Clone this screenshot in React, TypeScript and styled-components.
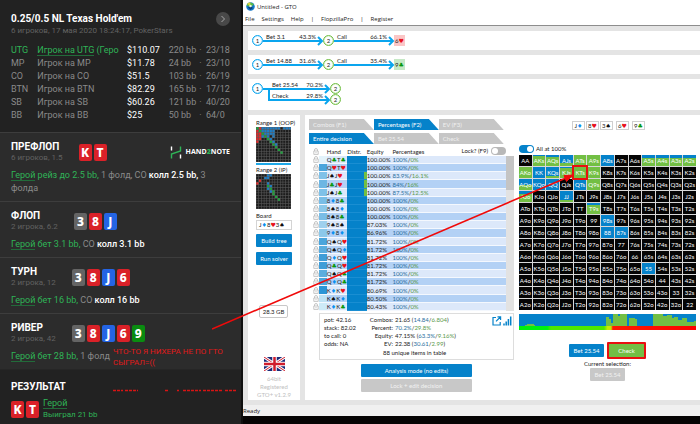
import React from "react";
import styled, { createGlobalStyle, css } from "styled-components";

const GlobalStyle = createGlobalStyle`
  *, *::before, *::after { box-sizing: border-box; }
  body { margin: 0; background: #060404; }
  h1, h2, p { margin: 0; }
  button, input { font: inherit; }
  table { border-collapse: collapse; border-spacing: 0; }
  td, th { padding: 0; text-align: left; font-weight: 400; }
`;

const BLUE = "#0582ca";
const GREEN = "#72bf44";

const Page = styled.div`
  position: relative;
  display: grid;
  grid-template-columns: 243px minmax(0, 1fr);
  min-height: 100vh;
  overflow: hidden;
`;

/* ---------- hand history ---------- */

const History = styled.aside`
  display: flex;
  flex-direction: column;
  background: #222222;
  border-right: 2px solid #101010;
  font-family: Roboto, sans-serif;
  font-size: 9px;
  color: #8a8a8a;
`;

const HistoryHeader = styled.header`
  padding: 12px 11px 10px;
  min-height: 131px;
`;

const TitleRow = styled.div`
  display: flex;
  justify-content: space-between;
  align-items: center;
  height: 13px;
`;

const Title = styled.h1`
  font-size: 10px;
  font-weight: 700;
  color: #ffffff;
`;

const RoundButton = styled.button`
  width: 14px;
  height: 14px;
  padding: 0;
  border: 0;
  border-radius: 50%;
  background: #484848;
  display: grid;
  place-items: center;
`;

const Meta = styled.p`
  font-size: 8px;
  line-height: 11px;
  color: #626262;
`;

const Seats = styled.table`
  width: 100%;
  margin-top: 8px;
  table-layout: fixed;
  white-space: nowrap;
  td { height: 13px; line-height: 13px; }
`;

const Seat = styled.tr<{ $hero?: boolean }>`
  td:nth-child(-n + 2) { color: ${(p) => (p.$hero ? "#2fb457" : "#8a8a8a")}; }
  td:nth-child(3) { color: #ffffff; }
`;

const HeroName = styled.span`
  border-bottom: 1px solid #226b3a;
`;

const Street = styled.section`
  position: relative;
  background: #2c2c2c;
  border-top: 1px solid #3d3d3d;
  padding: 8px 11px 6px;
`;

const StreetHead = styled.div`
  display: flex;
  align-items: center;
  gap: 16px;
  height: 22px;
  margin-bottom: 6px;
`;

const StreetName = styled.h2`
  font-size: 10px;
  line-height: 11px;
  font-weight: 700;
  color: #ffffff;
`;

const Cards = styled.div`
  display: flex;
  gap: 2px;
`;

const cardColor: Record<string, string> = { r: "#da2128", s: "#646464", b: "#2464e4", g: "#0a8c10" };

const Card = styled.span<{ $c: string }>`
  width: 13px;
  height: 17px;
  border-radius: 2px;
  background: ${(p) => cardColor[p.$c]};
  color: #ffffff;
  font: 800 12px/17px "Noto Sans", sans-serif;
  text-align: center;
`;

const Brand = styled.div`
  margin-left: auto;
  display: flex;
  align-items: center;
  gap: 4px;
  color: #ffffff;
  font: 700 7px/8px "Open Sans", sans-serif;
  b { color: #2fb457; }
`;

const Action = styled.p`
  line-height: 13px;
  color: #8a8a8a;
  a { color: #2fb457; text-decoration: none; border-bottom: 1px solid #226b3a; }
  em { color: #2fb457; font-style: normal; }
  strong { color: #ffffff; font-weight: 500; }
`;

const Remark = styled.p`
  position: absolute;
  left: 113px;
  top: 32px;
  width: 120px;
  font: 400 8px/11px Roboto, sans-serif;
  color: #e01a1a;
`;

const Result = styled.section`
  position: relative;
  border-top: 1px solid #262626;
  padding: 11px 11px 0;
  flex: 1;
`;

const Winner = styled.div`
  display: flex;
  align-items: center;
  gap: 4px;
  margin-top: 6px;
`;

const WinnerText = styled.div`
  font-size: 8px;
  line-height: 11px;
  color: #2fb457;
  a { font-size: 9px; color: inherit; text-decoration: none; border-bottom: 1px solid #226b3a; }
`;

const Scrap = styled.svg`
  position: absolute;
  left: 113px;
  top: 19px;
`;

type SeatRow = [string, string, string, string, string];
const seats: SeatRow[] = [
  ["UTG", "Игрок на UTG (Геро", "$110.07", "220 bb", "23/18"],
  ["MP", "Игрок на MP", "$11.78", "24 bb", "23/10"],
  ["CO", "Игрок на CO", "$51.5", "103 bb", "26/19"],
  ["BTN", "Игрок на BTN", "$82.29", "165 bb", "17/12"],
  ["SB", "Игрок на SB", "$60.26", "121 bb", "40/20"],
  ["BB", "Игрок на BB", "$25", "50 bb", "64/0"],
];

function CardRow({ cards }: { cards: string }) {
  return (
    <Cards>
      {cards.split(" ").map((c) => (
        <Card key={c} $c={c[1]}>{c[0]}</Card>
      ))}
    </Cards>
  );
}

function StreetBlock(p: { name: string; meta: string; cards: string; brand?: boolean; children: React.ReactNode }) {
  return (
    <Street>
      <StreetHead>
        <div>
          <StreetName>{p.name}</StreetName>
          <Meta>{p.meta}</Meta>
        </div>
        <CardRow cards={p.cards} />
        {p.brand && (
          <Brand>
            <svg width="12" height="13" viewBox="0 0 12 13" fill="none" strokeWidth="1.4">
              <path d="M1.500 .5V4.500M10.500 8.500V12.500" stroke="#fff" />
              <path d="M1.500 12.500V8L10.500 5V.5" stroke="#2fb457" />
            </svg>
            <span>HAND<b>2</b>NOTE</span>
          </Brand>
        )}
      </StreetHead>
      {p.children}
    </Street>
  );
}

function HandHistory() {
  return (
    <History>
      <HistoryHeader>
        <TitleRow>
          <Title>0.25/0.5 NL Texas Hold'em</Title>
          <RoundButton aria-label="Next hand">
            <svg width="6" height="8" viewBox="0 0 6 8" fill="none" stroke="#a8a8a8"><path d="M1.5 1l3 3-3 3" /></svg>
          </RoundButton>
        </TitleRow>
        <Meta>6 игроков, 17 мая 2020 18:24:17, PokerStars</Meta>
        <Seats>
          <colgroup>
            <col style={{ width: "12%" }} />
            <col style={{ width: "41%" }} />
            <col style={{ width: "19%" }} />
            <col style={{ width: "14%" }} />
            <col style={{ width: "3%" }} />
            <col style={{ width: "11%" }} />
          </colgroup>
          <tbody>
            {seats.map(([pos, name, stack, bb, stat], i) => (
              <Seat key={pos} $hero={i === 0}>
                <td>{pos}</td>
                <td>{i === 0 ? <><HeroName>Игрок на UTG</HeroName> (Геро</> : name}</td>
                <td>{stack}</td>
                <td>{bb}</td>
                <td>·</td>
                <td>{stat}</td>
              </Seat>
            ))}
          </tbody>
        </Seats>
      </HistoryHeader>
      <StreetBlock name="ПРЕФЛОП" meta="6 игроков, 1.5" cards="Kr Tr" brand>
        <Action><a href="#hero">Герой</a> <em>рейз до 2.5 bb,</em> 1 фолд, CO <strong>колл 2.5 bb,</strong>{" 3 "}{"фолда"}</Action>
      </StreetBlock>
      <StreetBlock name="ФЛОП" meta="2 игрока, 6.2" cards="3s 8r Jb">
        <Action><a href="#hero">Герой</a> <em>бет 3.1 bb,</em> CO <strong>колл 3.1 bb</strong></Action>
      </StreetBlock>
      <StreetBlock name="ТУРН" meta="2 игрока, 12" cards="3s 8r Jb 6r">
        <Action><a href="#hero">Герой</a> <em>бет 16 bb,</em> CO <strong>колл 16 bb</strong></Action>
      </StreetBlock>
      <StreetBlock name="РИВЕР" meta="2 игрока, 42" cards="3s 8r Jb 6r 9g">
        <Action><a href="#hero">Герой</a> <em>бет 28 bb,</em> 1 фолд</Action>
        <Remark>ЧТО-ТО Я НИХЕРА НЕ ПО ГТО СЫГРАЛ=((</Remark>
      </StreetBlock>
      <Result>
        <StreetName>РЕЗУЛЬТАТ</StreetName>
        <Winner>
          <CardRow cards="Kr Tr" />
          <WinnerText>
            <div><a href="#hero">Герой</a></div>
            <div>Выиграл 21 bb</div>
          </WinnerText>
        </Winner>
        <Scrap width="126" height="3" viewBox="0 0 126 3" aria-hidden="true">
          <path d="M0 1.500H10M12 1.500H25M52 1.500h3M64 1.500h2M70 1.500h18M90 1.500h20M112 1.500h12" stroke="#d81414" strokeWidth="1.5" strokeDasharray="3 1" fill="none" />
        </Scrap>
      </Result>
    </History>
  );
}

/* ---------- solver window ---------- */

const Window = styled.main`
  display: flex;
  flex-direction: column;
  align-self: start;
  background: #e4e4e4;
  color: #222222;
  font-family: Lato, sans-serif;
  font-size: 6px;
  line-height: 8px;
`;

const TitleBar = styled.div`
  display: flex;
  align-items: center;
  gap: 2px;
  height: 13px;
  padding-left: 3px;
  background: #ffffff;
  font: 6px/10px "Open Sans", sans-serif;
`;

const MenuBar = styled.nav`
  display: flex;
  align-items: center;
  gap: 7px;
  height: 13px;
  padding-left: 2px;
  background: #ffffff;
  border-bottom: 1px solid #8d8d8d;
  font: 6px/10px "Open Sans", sans-serif;
  a { color: inherit; text-decoration: none; }
`;

const Workspace = styled.div`
  display: flex;
  flex-direction: column;
  gap: 5px;
  padding: 5px 0 5px 5px;
`;

const Tree = styled.div<{ $branched?: boolean }>`
  display: flex;
  flex-direction: column;
  background: #ffffff;
  padding: 4px 0 ${(p) => (p.$branched ? 5 : 4)}px 4px;
`;

const TreeRow = styled.div<{ $indent?: boolean }>`
  display: flex;
  align-items: center;
  height: 11px;
  ${(p) => p.$indent && css`padding-left: 16px;`}
`;

const Node = styled.span<{ $c: string }>`
  width: 11px;
  height: 11px;
  border-radius: 50%;
  border: 1px solid ${(p) => p.$c};
  box-shadow: inset 0 0 1px ${(p) => p.$c};
  background: #ffffff;
  text-align: center;
  line-height: 9px;
  flex: none;
`;

const Edge = styled.span<{ $w: number; $pad?: number }>`
  position: relative;
  display: flex;
  justify-content: space-between;
  width: ${(p) => p.$w}px;
  height: 11px;
  padding: 0 7px 0 ${(p) => p.$pad ?? 3}px;
  line-height: 4px;
  svg { position: absolute; left: 0; top: 0; }
`;

function Arrow(p: { w: number; from: string; pct: string; pad?: number; elbow?: boolean }) {
  return (
    <Edge $w={p.w} $pad={p.pad}>
      <svg width={p.w} height="11" viewBox={`0 0 ${p.w} 11`} overflow="visible" fill="none" stroke="#0aa5ee" strokeWidth="2">
        <path d={p.elbow ? `M1 -5V6H${p.w - 2}` : `M0 6H${p.w - 2}`} />
        <path d={`M${p.w - 5} 2L${p.w - 1} 6L${p.w - 5} 10`} />
      </svg>
      <span>{p.from}</span>
      <span>{p.pct}</span>
    </Edge>
  );
}

const RiverCard = styled.span<{ $good?: boolean }>`
  width: 11px;
  height: 11px;
  line-height: 11px;
  text-align: center;
  white-space: nowrap;
  background: ${(p) => (p.$good ? "#c5e8c5" : "#fbc6c6")};
`;

const Lower = styled.div`
  display: grid;
  grid-template-columns: 52px minmax(0, 1fr);
  gap: 5px;
`;

const Side = styled.div`
  display: flex;
  flex-direction: column;
  background: #ffffff;
  padding: 4px 8px 0;
  white-space: nowrap;
`;

const RangeMap = styled.svg`
  width: 35px;
  height: 35px;
  margin-bottom: 3px;
`;

const Underline = styled.div`
  width: 35px;
  height: 2px;
  margin: -2px 0 1px;
  background: #1da8e8;
`;

const BoardBox = styled.div`
  width: 36px;
  height: 10px;
  margin-bottom: 4px;
  border: 1px solid #d4d4d4;
  padding-left: 2px;
`;

const Button = styled.button<{ $tone?: "gray" | "green" }>`
  border: 0;
  padding: 0 4px;
  height: 13px;
  border-radius: 1px;
  background: ${(p) => (p.$tone === "gray" ? "#c8c8c8" : p.$tone === "green" ? GREEN : BLUE)};
  color: ${(p) => (p.$tone === "gray" ? "#f2f2f2" : "#ffffff")};
  line-height: 13px;
  white-space: nowrap;
`;

const SideButton = styled(Button)`
  width: 36px;
  padding: 0;
  margin-bottom: 5px;
`;

const Memory = styled.div`
  width: 29px;
  margin: 35px 0 39px 3px;
  border: 1px solid #c8c8c8;
  border-radius: 2px;
  line-height: 11px;
  text-align: center;
`;

const License = styled.div`
  display: flex;
  flex-direction: column;
  align-items: center;
  color: #c0c0c0;
  text-align: center;
  svg { margin-bottom: 4px; }
`;

const Main = styled.div`
  display: grid;
  grid-template-columns: minmax(0, 205fr) minmax(0, 177fr);
  gap: 5px;
  background: #ffffff;
  padding: 4px 4px 8px;
`;

const Column = styled.div`
  display: flex;
  flex-direction: column;
  min-width: 0;
`;

const Tabs = styled.div`
  display: flex;
  width: 95%;
  height: 11px;
  margin-bottom: 3px;
`;

const Tab = styled.button<{ $on?: boolean }>`
  flex: 1;
  border: 0;
  padding: 0 4px;
  text-align: left;
  line-height: 11px;
  white-space: nowrap;
  background: ${(p) => (p.$on ? BLUE : "#c6c6c6")};
  color: ${(p) => (p.$on ? "#ffffff" : "#f0f0f0")};
  clip-path: polygon(0 0, calc(100% - 10px) 0, 100% 100%, 0 100%);
`;

const HandsWrap = styled.div`
  display: flex;
  align-items: flex-end;
  position: relative;
`;

const Hands = styled.table`
  flex: 1;
  height: 164px;
  table-layout: fixed;
  line-height: 7px;
  white-space: nowrap;
  th { height: 9px; }
`;

const HandRow = styled.tr<{ $alt: boolean }>`
  td { border-bottom: 1px solid #f4f8fe; }
  td:first-child { border-color: #ffffff; }
  td:nth-child(n + 3) { background: ${(p) => (p.$alt ? "#b3d1f5" : "#dce8fa")}; }
`;

const LockCell = styled.td`
  padding-left: 4px;
  svg { display: block; }
`;

const Shade = styled.td<{ $c: string }>`
  background: ${(p) => p.$c};
`;

const Distr = styled.td<{ $green?: boolean }>`
  &&&& {
    background: ${(p) => (p.$green ? `linear-gradient(90deg, ${BLUE} 85%, ${GREEN} 85%)` : BLUE)};
    border-color: #1a8ed2;
  }
`;

const Blue = styled.span`color: #2a6f9e;`;
const Green = styled.span`color: #5a9a4c;`;

const ScrollTrack = styled.div`
  width: 8px;
  height: 155px;
  background: #e2e2e2;
  &::before { content: ""; display: block; height: 34px; background: #c4c4c4; }
`;

const LockSwitch = styled.label`
  position: absolute;
  right: 8px;
  top: 0;
  display: flex;
  align-items: center;
  gap: 3px;
`;

const Switch = styled.input`
  appearance: none;
  width: 15px;
  height: 8px;
  margin: 0;
  border-radius: 4px;
  background: #b8b8b8;
  &::before {
    content: "";
    display: block;
    width: 6px;
    height: 6px;
    margin: 1px;
    border-radius: 50%;
    background: #ffffff;
  }
  &:checked { background: ${BLUE}; }
  &:checked::before { margin-left: 8px; }
`;

const Info = styled.div`
  display: grid;
  grid-template-columns: 35px 32px 1fr auto;
  column-gap: 2px;
  margin: 2px 0 4px 10px;
  padding: 2px 1px 2px 4px;
  border: 1px solid #dddddd;
  height: 47px;
  white-space: nowrap;
`;

const InfoList = styled.div<{ $right?: boolean }>`
  text-align: ${(p) => (p.$right ? "right" : "left")};
`;

const Unique = styled.div`
  grid-column: 1 / -1;
  padding-left: 59px;
  line-height: 10px;
`;

const Modes = styled.div`
  display: flex;
  flex-direction: column;
  gap: 2px;
  width: 54%;
  margin-left: 52px;
`;

const BoardCards = styled.div`
  display: flex;
  gap: 1px;
  margin: 2px 0 15px 53px;
`;

const BoardCard = styled.span<{ $gap?: boolean }>`
  width: 13px;
  height: 9px;
  margin-left: ${(p) => (p.$gap ? 2 : 0)}px;
  border: 1px solid #cfcfcf;
  line-height: 7px;
  text-align: center;
  white-space: nowrap;
`;

const AllLabel = styled.label`
  display: flex;
  align-items: center;
  gap: 2px;
  height: 8px;
  margin-bottom: 2px;
`;

const Matrix = styled.div`
  display: grid;
  grid-template-columns: repeat(13, minmax(0, 1fr));
  grid-auto-rows: 11px;
  gap: 1px;
  margin-bottom: 4px;
  background: #d8d8d8;
`;

const Cell = styled.span<{ $bg: string; $mark?: boolean }>`
  background: ${(p) => p.$bg};
  color: #ffffff;
  line-height: 11px;
  text-align: center;
  ${(p) => p.$mark && css`outline: 2px solid #e81010; z-index: 1;`}
`;

const Histogram = styled.svg`
  width: 100%;
  height: 12px;
  display: block;
  background: ${BLUE};
`;

const Heat = styled.div`
  height: 4px;
  background: linear-gradient(90deg, #00f010 0 16%, #4ee800 18% 48%, #c8e800 50% 52%, #ff1a00 53%, #ff0000);
`;

const Choices = styled.div`
  display: flex;
  align-items: center;
  justify-content: center;
  gap: 3px;
  margin-top: 12px;
`;

const ChoiceButton = styled(Button)<{ $mark?: boolean }>`
  width: ${(p) => (p.$mark ? 39 : 35)}px;
  ${(p) => p.$mark && css`height: 17px; border: 2px solid #e81010;`}
`;

const Selection = styled.div`
  display: flex;
  flex-direction: column;
  align-items: center;
  line-height: 9px;
`;

const Status = styled.footer`
  height: 11px;
  background: #f0f0f0;
  font: 6px/12px "Open Sans", sans-serif;
`;

const Annotation = styled.svg`
  position: absolute;
  left: 212px;
  top: 166px;
  pointer-events: none;
`;

const SuitMark = styled.span<{ $c: string }>`
  color: ${(p) => p.$c};
  font: 6px/6px "DejaVu Sans", sans-serif;
`;

const suits: Record<string, [string, string]> = {
  s: ["♠", "#111111"],
  h: ["♥", "#e8101c"],
  d: ["♦", "#0a90f0"],
  c: ["♣", "#08980c"],
};

function HandText({ v }: { v: string }) {
  return (
    <>
      {v.split("").map((ch, i) =>
        suits[ch] ? <SuitMark key={i} $c={suits[ch][1]}>{suits[ch][0]}</SuitMark> : ch
      )}
    </>
  );
}

function Lock() {
  return (
    <svg width="6" height="7" viewBox="0 0 6 7" fill="none" stroke="#b9b9b9" strokeWidth=".8">
      <path d="M1.5 3V2a1.5 1.5 0 0 1 3 0v1M.8 3h4.4v3.4H.8zM3 4v1.2" />
    </svg>
  );
}

type Hand = [string, string, string, string, string];
const hands: Hand[] = [
  ["QcTc", "100.00%", "100%", "0%", "#e3f3fb"],
  ["QhTh", "100.00%", "100%", "0%", "#4ba5dc"],
  ["JsJh", "100.00%", "83.9%", "16.1%", "#7fc1e8"],
  ["JcJh", "100.00%", "84%", "16%", "#6db6e3"],
  ["JsJc", "100.00%", "87.5%", "12.5%", "#7fc1e8"],
  ["8d8c", "100.00%", "100%", "0%", "#79bde6"],
  ["8s8d", "100.00%", "100%", "0%", "#8cc8ea"],
  ["8s8c", "100.00%", "100%", "0%", "#79bde6"],
  ["9s8s", "87.03%", "100%", "0%", "#9ed0ee"],
  ["9d8d", "86.96%", "100%", "0%", "#8cc8ea"],
  ["QsQh", "81.72%", "100%", "0%", "#4ba5dc"],
  ["QsQd", "81.72%", "100%", "0%", "#5badde"],
  ["QdQh", "81.72%", "100%", "0%", "#3f9dd8"],
  ["QcQh", "81.72%", "100%", "0%", "#3f9dd8"],
  ["QsQc", "81.72%", "100%", "0%", "#5badde"],
  ["QdQc", "81.72%", "100%", "0%", "#4ba5dc"],
  ["KdKh", "80.69%", "100%", "0%", "#2c95d6"],
  ["KsKd", "80.50%", "100%", "0%", "#bfe2f4"],
  ["KdKc", "80.43%", "100%", "0%", "#cdeaf7"],
];

const ranks = "AKQJT98765432".split("");

/* share of the cell, from the top, that is drawn blue; the rest is green */
const mix: Record<string, number> = {
  AKs: 12, AQs: 15, AJs: 75, ATs: 0, A9s: 0, A8s: 100, A5s: 28, A4s: 28, A3s: 28, A2s: 28,
  AKo: 0, KK: 100, KQs: 85, KJs: 12, KTs: 0, K9s: 0,
  AQo: 55, KQo: 100, QQ: 100, QTs: 100, Q9s: 0,
  AJo: 30, JJ: 82, T9s: 20, "98s": 100, "88": 100, "87s": 100, "55": 100,
};

function cellName(r: number, c: number) {
  if (r === c) return ranks[r] + ranks[c];
  return c > r ? `${ranks[r]}${ranks[c]}s` : `${ranks[c]}${ranks[r]}o`;
}

function cellFill(name: string) {
  const m = mix[name];
  if (m === undefined) return "#050505";
  return `linear-gradient(${BLUE} ${m}%, ${GREEN} ${m}%)`;
}

const range1 = [
  "grbbbbbbb.bbb", "rgbbbbb......", "rrgbbbb......", "rrbgb.b......", "rr..gb.......", "r....gb......",
  "......gb.....", ".......g.....", "........g....", ".........g...", "", "", "",
];
const range2 = [
  "....bb.......", "...bb........", ".r...........", "r...b........", "....gb.......", "....bg.......",
  ".....bg......", "......g......", ".......g.....", "........g....", "", "", "",
];
const mapColor: Record<string, string> = { g: "#1aa53a", r: "#e02828", b: "#1c7ec8" };

function MiniMap({ rows }: { rows: string[] }) {
  return (
    <RangeMap viewBox="0 0 39 39">
      <rect width="39" height="39" fill="#5c5c5c" />
      {rows.map((row, y) =>
        ranks.map((_, x) => (
          <rect key={`${x}-${y}`} x={x * 3 + 0.3} y={y * 3 + 0.3} width="2.4" height="2.4" fill={mapColor[row[x]] ?? "#1d1d1d"} />
        ))
      )}
    </RangeMap>
  );
}

function Flag() {
  return (
    <svg width="21" height="14" viewBox="0 0 42 28">
      <rect width="42" height="28" fill="#1b2a78" />
      <path d="M0 0L42 28M42 0L0 28" stroke="#fff" strokeWidth="6" />
      <path d="M0 0L42 28M42 0L0 28" stroke="#d01c2c" strokeWidth="2" />
      <path d="M21 0V28M0 14H42" stroke="#fff" strokeWidth="9" />
      <path d="M21 0V28M0 14H42" stroke="#d01c2c" strokeWidth="5" />
    </svg>
  );
}

function AppIcon() {
  return (
    <svg width="9" height="9" viewBox="0 0 18 18">
      <circle cx="9" cy="9" r="8.5" fill="#1578c8" />
      <path d="M1 7A8.5 8.5 0 0 1 16 5L9 10Z" fill="#58b947" />
      <path d="M2 4A8.5 8.5 0 0 1 9 .5L8 7Z" fill="#d8d436" />
      <path d="M4 11l5-3 5 4-5 4Z" fill="#0b3f80" />
      <circle cx="9" cy="8" r="2.5" fill="#e9f6d8" />
    </svg>
  );
}

function GameTree() {
  return (
    <>
      <Tree>
        <TreeRow>
          <Node $c="#0aa5ee">1</Node>
          <Arrow w={60} from="Bet 3.1" pct="43.3%" />
          <Node $c={GREEN}>2</Node>
          <Arrow w={60} from="Call" pct="66.1%" />
          <RiverCard><HandText v="6h" /></RiverCard>
        </TreeRow>
      </Tree>
      <Tree>
        <TreeRow>
          <Node $c="#0aa5ee">1</Node>
          <Arrow w={60} from="Bet 14.88" pct="31.6%" />
          <Node $c={GREEN}>2</Node>
          <Arrow w={60} from="Call" pct="35.4%" />
          <RiverCard $good><HandText v="9c" /></RiverCard>
        </TreeRow>
      </Tree>
      <Tree $branched>
        <TreeRow>
          <Node $c="#0aa5ee">1</Node>
          <Arrow w={67} from="Bet 25.54" pct="70.2%" pad={9} />
          <Node $c={GREEN}>2</Node>
        </TreeRow>
        <TreeRow $indent>
          <Arrow w={62} from="Check" pct="29.8%" pad={4} elbow />
          <Node $c={GREEN}>2</Node>
        </TreeRow>
      </Tree>
    </>
  );
}

function HandTable() {
  return (
    <HandsWrap>
      <Hands>
        <colgroup>
          <col style={{ width: "5%" }} />
          <col style={{ width: "4%" }} />
          <col style={{ width: "10%" }} />
          <col style={{ width: "10%" }} />
          <col style={{ width: "13%" }} />
          <col style={{ width: "58%" }} />
        </colgroup>
        <thead>
          <tr>
            <LockCell as="th" aria-label="Locked"><Lock /></LockCell>
            <th />
            <th>Hand</th>
            <th>Distr.</th>
            <th>Equity</th>
            <th>Percentages</th>
          </tr>
        </thead>
        <tbody>
          {hands.map(([h, eq, bet, check, shade], i) => (
            <HandRow key={h} $alt={i % 2 === 1}>
              <LockCell><Lock /></LockCell>
              <Shade $c={shade} />
              <td><HandText v={h} /></td>
              <Distr $green={i > 1 && i < 5} />
              <td>{eq}</td>
              <td><Blue>{bet}</Blue>/<Green>{check}</Green></td>
            </HandRow>
          ))}
        </tbody>
      </Hands>
      <ScrollTrack />
      <LockSwitch>Lock? (F9)<Switch type="checkbox" /></LockSwitch>
    </HandsWrap>
  );
}

function Summary() {
  return (
    <Info>
      <InfoList>
        <div>pot: 42.16</div><div>stack: 82.02</div><div>to call: 0</div><div>odds: NA</div>
      </InfoList>
      <InfoList $right>
        <div>Combos:</div><div>Percent:</div><div>Equity:</div><div>EV:</div>
      </InfoList>
      <InfoList>
        <div>21.65 (<Blue>14.84</Blue>/<Green>6.804</Green>)</div>
        <div><Blue>70.2%</Blue>/<Green>29.8%</Green></div>
        <div>47.15% (<Blue>63.3%</Blue>/<Green>9.16%</Green>)</div>
        <div>22.38 (<Blue>30.61</Blue>/<Green>2.99</Green>)</div>
      </InfoList>
      <svg width="20" height="10" viewBox="0 0 20 10" fill="none" stroke={BLUE} strokeWidth="1.2">
        <path d="M4 1.5H1V9H8.2V6M5.5 .8H8.6V4M8.4 1L4 5.4" />
        <path d="M12 9.5V7.5M14.2 9.5V5.5M16.4 9.5V3M18.7 9.5V.5" strokeWidth="1.5" />
      </svg>
      <Unique>88 unique items in table</Unique>
    </Info>
  );
}

function Solver() {
  return (
    <Window>
      <TitleBar><AppIcon />Untitled - GTO</TitleBar>
      <MenuBar>
        <a href="#file">File</a><a href="#settings">Settings</a><a href="#help">Help</a><span>|</span>
        <a href="#pro">FlopzillaPro</a><span>|</span><a href="#register">Register</a>
      </MenuBar>
      <Workspace>
        <GameTree />
        <Lower>
          <Side>
            <div>Range 1 (OOP)</div>
            <MiniMap rows={range1} />
            <Underline />
            <div>Range 2 (IP)</div>
            <MiniMap rows={range2} />
            <div>Board</div>
            <BoardBox><HandText v="Jd8h3s" /></BoardBox>
            <SideButton>Build tree</SideButton>
            <SideButton>Run solver</SideButton>
            <Memory>28.3 GB</Memory>
            <License>
              <Flag />
              <div>64bit</div><div>Registered</div><div>GTO+ v1.2.9</div>
            </License>
          </Side>
          <Main>
            <Column>
              <Tabs><Tab>Combos (F1)</Tab><Tab $on>Percentages (F2)</Tab><Tab>EV (F3)</Tab></Tabs>
              <Tabs><Tab $on>Entire decision</Tab><Tab>Bet 25.54</Tab><Tab>Check</Tab></Tabs>
              <HandTable />
              <Summary />
              <Modes>
                <Button>Analysis mode (no edits)</Button>
                <Button $tone="gray">Lock + edit decision</Button>
              </Modes>
            </Column>
            <Column>
              <BoardCards>
                {["Jd", "8h", "3s", "6h", "9c"].map((c, i) => (
                  <BoardCard key={c} $gap={i > 2}><HandText v={c} /></BoardCard>
                ))}
              </BoardCards>
              <AllLabel><Switch type="checkbox" defaultChecked />All at 100%</AllLabel>
              <Matrix>
                {ranks.map((_, r) =>
                  ranks.map((__, c) => {
                    const name = cellName(r, c);
                    return <Cell key={name} $bg={cellFill(name)} $mark={name === "KTs"}>{name}</Cell>;
                  })
                )}
              </Matrix>
              <Histogram viewBox="0 0 177 12" preserveAspectRatio="none">
                <path fill={GREEN} d="M6 12V11h2v-1h7v1h1v1ZM87 12V3h3v2h2v4h2V0h5v2h2V0h7v12ZM110 12V4h6v1h2v7ZM134 12V0h10v2h4V1h5v3h2V3h4v3h4V4h5v4h7V7h2v5Z" />
              </Histogram>
              <Heat />
              <Choices>
                <ChoiceButton>Bet 25.54</ChoiceButton>
                <ChoiceButton $tone="green" $mark>Check</ChoiceButton>
              </Choices>
              <Selection>
                Current selection:
                <ChoiceButton $tone="gray">Bet 25.54</ChoiceButton>
              </Selection>
            </Column>
          </Main>
        </Lower>
      </Workspace>
      <Status>Ready</Status>
    </Window>
  );
}

export default function App() {
  return (
    <>
      <GlobalStyle />
      <Page>
        <HandHistory />
        <Solver />
        <Annotation width="362" height="164" viewBox="0 0 362 164" aria-hidden="true">
          <path d="M0 163L354 12" stroke="#f00a0a" strokeWidth="1.6" />
          <path d="M361 9L354.500 15.500L352 9.500Z" fill="#f00a0a" stroke="#f00a0a" />
        </Annotation>
      </Page>
    </>
  );
}
